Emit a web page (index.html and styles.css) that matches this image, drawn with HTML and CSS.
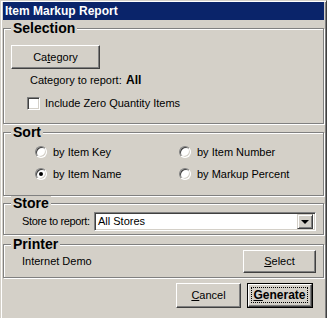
FILE: index.html
```html
<!DOCTYPE html>
<html>
<head>
<meta charset="utf-8">
<link rel="stylesheet" href="styles.css">
</head>
<body>
<div class="window">
  <div class="titlebar">Item Markup Report</div>

  <div class="group g-sel">
    <div class="legend">Selection</div>
    <div class="btn btn-cat"><span>Ca<u>t</u>egory</span></div>
    <div class="cat-row"><span class="cat-label">Category to report:</span><b class="cat-val">All</b></div>
    <div class="chk-row"><span class="chk"></span><span>Include Zero Quantity Items</span></div>
  </div>

  <div class="group g-sort">
    <div class="legend">Sort</div>
    <div class="radio-grid">
      <div class="radio-row"><span class="radio"></span><span>by Item Key</span></div>
      <div class="radio-row"><span class="radio"></span><span>by Item Number</span></div>
      <div class="radio-row"><span class="radio checked"></span><span>by Item Name</span></div>
      <div class="radio-row"><span class="radio"></span><span>by Markup Percent</span></div>
    </div>
  </div>

  <div class="group g-store">
    <div class="legend">Store</div>
    <div class="store-row">
      <span class="store-label">Store to report:</span>
      <div class="combo">
        <span class="combo-text">All Stores</span>
        <span class="combo-btn"><span class="arrow"></span></span>
      </div>
    </div>
  </div>

  <div class="group g-printer">
    <div class="legend">Printer</div>
    <div class="printer-row">
      <span class="printer-name">Internet Demo</span>
      <div class="btn btn-select"><span><u>S</u>elect</span></div>
    </div>
  </div>

  <div class="actions">
    <div class="btn btn-action"><span><u>C</u>ancel</span></div>
    <div class="btn-default"><div class="btn btn-inner"><span class="focus"><u>G</u>enerate</span></div></div>
  </div>
</div>
</body>
</html>
```

FILE: styles.css
```css
* { box-sizing: border-box; }
html, body { margin: 0; padding: 0; }
body {
  background: #d4d0c8;
  overflow: hidden;
  font: 11px/13px "Liberation Sans", Arial, sans-serif;
  color: #000;
}
.window {
  width: 327px;
  height: 318px;
  background: #d4d0c8;
  border-top: 1px solid #d4d0c8;
  border-left: 1px solid #d4d0c8;
  border-right: 1px solid #404040;
  box-shadow: inset 1px 1px #fff, inset -1px 0 #808080;
  padding: 1px 2px 0 2px;
}
.titlebar {
  height: 18px;
  line-height: 18px;
  background: #0a246a;
  color: #fff;
  font-weight: bold;
  font-size: 12px;
  padding-left: 2px;
  white-space: nowrap;
}
.group {
  border: 1px solid #808080;
  box-shadow: inset 1px 1px #fff, 1px 1px #fff;
}
.legend {
  width: fit-content;
  margin: -8px 0 0 7px;
  padding: 0 2px;
  background: #d4d0c8;
  font: bold 14px/15px "Liberation Sans", Arial, sans-serif;
  position: relative;
}
.g-sel { margin-top: 8px; padding-bottom: 13px; }
.g-sort { margin-top: 8px; padding-bottom: 13px; }
.g-store { margin-top: 7px; padding-bottom: 3px; }
.g-printer { margin-top: 9px; padding-bottom: 4px; }

.btn {
  display: flex;
  align-items: center;
  justify-content: center;
  background: #d4d0c8;
  border: 1px solid;
  border-color: #fff #404040 #404040 #fff;
  box-shadow: inset -1px -1px #808080;
}
.btn-cat {
  width: 89px;
  height: 24px;
  margin: 9px 0 0 7px;
}
.cat-row {
  display: flex;
  margin: 5px 0 0 26px;
  height: 13px;
  align-items: baseline;
}
.cat-label { width: 96px; }
.cat-val { font-size: 12px; }
.chk-row {
  display: flex;
  align-items: center;
  margin: 10px 0 0 23px;
  height: 13px;
  gap: 5px;
}
.chk {
  width: 13px;
  height: 13px;
  background: #fff;
  border: 1px solid;
  border-color: #808080 #fff #fff #808080;
  box-shadow: inset 1px 1px #404040, inset -1px -1px #d4d0c8;
}
.radio-grid {
  display: grid;
  grid-template-columns: 144px 1fr;
  row-gap: 6px;
  margin: 4px 0 0 31px;
}
.radio-row {
  display: flex;
  align-items: center;
  height: 16px;
  gap: 6px;
}
.radio {
  width: 12px;
  height: 12px;
  border-radius: 50%;
  background: #fff;
  border: 1px solid;
  border-color: #808080 #fff #fff #808080;
  box-shadow: inset 1px 1px #404040, inset -1px -1px #d4d0c8;
  display: flex;
  align-items: center;
  justify-content: center;
}
.radio.checked::after {
  content: "";
  width: 4px;
  height: 4px;
  border-radius: 50%;
  background: #000;
}
.store-row {
  display: flex;
  align-items: center;
  margin: 1px 7px 0 18px;
}
.store-label {
  width: 72px;
  white-space: nowrap;
  letter-spacing: -0.35px;
}
.combo {
  flex: 1;
  height: 19px;
  display: flex;
  align-items: center;
  background: #fff;
  border: 1px solid;
  border-color: #808080 #fff #fff #808080;
  box-shadow: inset 1px 1px #404040, inset -1px -1px #d4d0c8;
  padding: 2px 2px 2px 3px;
}
.combo-text { flex: 1; }
.combo-btn {
  width: 16px;
  height: 15px;
  background: #d4d0c8;
  border: 1px solid;
  border-color: #d4d0c8 #404040 #404040 #d4d0c8;
  box-shadow: inset 1px 1px #fff, inset -1px -1px #808080;
  display: flex;
  align-items: center;
  justify-content: center;
}
.arrow {
  width: 0;
  height: 0;
  border-left: 4px solid transparent;
  border-right: 4px solid transparent;
  border-top: 4px solid #000;
  margin-top: 1px;
}
.printer-row {
  display: flex;
  align-items: center;
  justify-content: space-between;
  margin: -2px 7px 0 18px;
}
.btn-select { width: 73px; height: 23px; }
.actions {
  display: flex;
  justify-content: flex-end;
  gap: 6px;
  margin: 5px 11px 0 0;
}
.btn-action { width: 65px; height: 25px; }
.btn-default {
  width: 66px;
  height: 25px;
  border: 1px solid #000;
}
.btn-inner {
  width: 100%;
  height: 100%;
  padding: 2px 3px 3px 2px;
  font-weight: bold;
  font-size: 12px;
}
.focus {
  width: 100%;
  height: 100%;
  display: flex;
  align-items: center;
  justify-content: center;
  border: 1px dotted #000;
}
```
